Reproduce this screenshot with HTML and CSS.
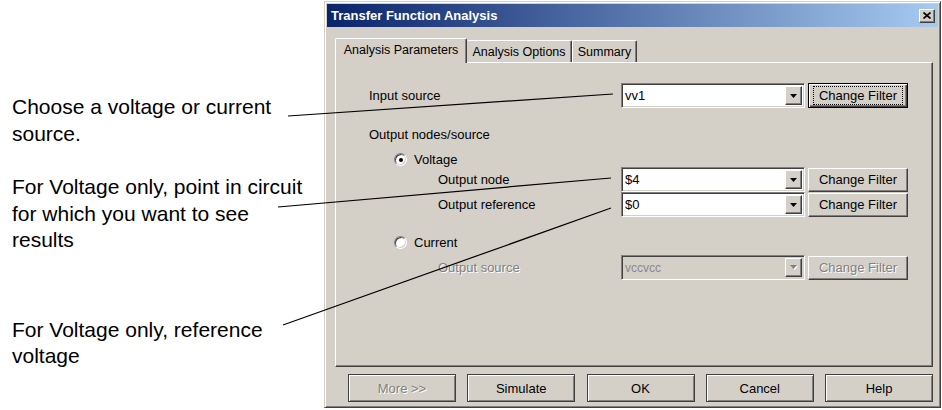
FILE: index.html
```html
<!DOCTYPE html>
<html>
<head>
<meta charset="utf-8">
<title>Transfer Function Analysis</title>
<link rel="stylesheet" href="styles.css">
</head>
<body>
<div class="page">
  <div class="notes">
    <p class="note">Choose a voltage or current<br>source.</p>
    <p class="note n2">For Voltage only, point in circuit<br>for which you want to see<br>results</p>
    <p class="note n3">For Voltage only, reference<br>voltage</p>
  </div>
  <div class="dialog">
    <div class="titlebar">
      <span class="title">Transfer Function Analysis</span>
      <span class="close"><svg width="8" height="7" viewBox="0 0 8 7"><path d="M0.5 0.5 L7.5 6.5 M7.5 0.5 L0.5 6.5" stroke="#000" stroke-width="1.7" fill="none"/></svg></span>
    </div>
    <div class="client">
      <div class="tabs">
        <div class="tab active t1">Analysis Parameters</div>
        <div class="tab t2">Analysis Options</div>
        <div class="tab t3">Summary</div>
      </div>
      <div class="panel">
        <div class="row">
          <span class="lbl">Input source</span>
          <div class="combo"><span class="val">vv1</span><span class="drop"><svg width="7" height="4" viewBox="0 0 7 4"><path d="M0 0 H7 L3.5 4 Z" fill="#000"/></svg></span></div>
          <div class="cf focus"><span class="focusrect">Change Filter</span></div>
        </div>
        <div class="heading">Output nodes/source</div>
        <div class="radiorow r1"><span class="radio checked"></span><span>Voltage</span></div>
        <div class="row">
          <span class="lbl sub">Output node</span>
          <div class="combo"><span class="val">$4</span><span class="drop"><svg width="7" height="4" viewBox="0 0 7 4"><path d="M0 0 H7 L3.5 4 Z" fill="#000"/></svg></span></div>
          <div class="cf">Change Filter</div>
        </div>
        <div class="row">
          <span class="lbl sub">Output reference</span>
          <div class="combo"><span class="val">$0</span><span class="drop"><svg width="7" height="4" viewBox="0 0 7 4"><path d="M0 0 H7 L3.5 4 Z" fill="#000"/></svg></span></div>
          <div class="cf">Change Filter</div>
        </div>
        <div class="radiorow r2"><span class="radio"></span><span>Current</span></div>
        <div class="row r3">
          <span class="lbl sub disabled">Output source</span>
          <div class="combo off"><span class="val">vccvcc</span><span class="drop"><svg width="8" height="5" viewBox="0 0 8 5"><path d="M1 1 H8 L4.5 5 Z" fill="#fff"/><path d="M0 0 H7 L3.5 4 Z" fill="#808080"/></svg></span></div>
          <div class="cf disabled">Change Filter</div>
        </div>
      </div>
      <div class="buttons">
        <div class="btn disabled">More &gt;&gt;</div>
        <div class="btn">Simulate</div>
        <div class="btn">OK</div>
        <div class="btn">Cancel</div>
        <div class="btn">Help</div>
      </div>
    </div>
  </div>
</div>
<svg class="leaders" width="942" height="410" viewBox="0 0 942 410">
  <line x1="288" y1="116" x2="613" y2="94" stroke="#000" stroke-width="1.2"/>
  <line x1="278" y1="207" x2="611" y2="178" stroke="#000" stroke-width="1.2"/>
  <line x1="283" y1="325" x2="611" y2="208" stroke="#000" stroke-width="1.2"/>
</svg>
</body>
</html>
```
FILE: styles.css
```css
html, body {
  margin: 0;
  padding: 0;
}
body {
  width: 942px;
  height: 410px;
  background: #fff;
  position: relative;
  overflow: hidden;
  font-family: "Liberation Sans", Arial, sans-serif;
}
.page {
  display: flex;
  height: 410px;
}
.notes {
  width: 324px;
  box-sizing: border-box;
  padding: 94px 0 0 12px;
  font-size: 21px;
  line-height: 26.5px;
  color: #000;
}
.note {
  margin: 0;
}
.n2 { margin-top: 27px; }
.n3 { margin-top: 63px; }

.dialog {
  margin-top: 1px;
  width: 617px;
  height: 407px;
  box-sizing: border-box;
  background: #d4d0c8;
  border: 1px solid;
  border-color: #d4d0c8 #404040 #404040 #d4d0c8;
  box-shadow: inset 1px 1px #fff, inset -1px -1px #808080;
  padding: 2px;
  display: flex;
  flex-direction: column;
  font-size: 13px;
  color: #000;
}
.titlebar {
  height: 23px;
  flex: none;
  background: linear-gradient(to right, #0a246a, #a6caf0);
  display: flex;
  align-items: center;
  justify-content: space-between;
  padding: 0 3px 0 4px;
}
.title {
  color: #fff;
  font-weight: bold;
  font-size: 13px;
}
.close {
  width: 16px;
  height: 14px;
  box-sizing: border-box;
  background: #d4d0c8;
  border: 1px solid;
  border-color: #fff #404040 #404040 #fff;
  box-shadow: inset -1px -1px #808080;
  display: flex;
  align-items: center;
  justify-content: center;
}
.close svg { display: block; }

.client {
  padding: 11px 0 0 8px;
  flex: 1;
}
.tabs {
  display: flex;
  align-items: flex-end;
  height: 24px;
  position: relative;
  z-index: 1;
  font-size: 12.5px;
}
.tab {
  box-sizing: border-box;
  height: 22px;
  border-top: 1px solid #fff;
  border-left: 1px solid #fff;
  border-right: 1px solid #404040;
  box-shadow: inset -1px 0 #808080;
  border-radius: 2px 2px 0 0;
  display: flex;
  align-items: center;
  justify-content: center;
  background: #d4d0c8;
  white-space: nowrap;
}
.tab.active {
  height: 25px;
  margin-bottom: -1px;
  padding-bottom: 2px;
}
.t1 { width: 132px; }
.t2 { width: 105px; border-left: none; }
.t3 { width: 65px; }

.panel {
  width: 598px;
  height: 305px;
  box-sizing: border-box;
  border: 1px solid;
  border-color: #fff #404040 #404040 #fff;
  box-shadow: inset -1px -1px #808080;
  padding: 20px 0 0 33px;
}
.row {
  display: flex;
  align-items: center;
  height: 25px;
}
.lbl {
  width: 252px;
  box-sizing: border-box;
}
.lbl.sub { padding-left: 69px; }
.combo {
  width: 184px;
  height: 25px;
  box-sizing: border-box;
  background: #fff;
  border: 1px solid;
  border-color: #808080 #fff #fff #808080;
  box-shadow: inset 1px 1px #404040, inset -1px -1px #d4d0c8;
  display: flex;
  align-items: stretch;
}
.combo .val {
  flex: 1;
  padding-left: 3px;
  display: flex;
  align-items: center;
}
.combo.off { background: #d4d0c8; }
.combo.off .val { color: #8a8a8a; font-size: 12px; }
.drop {
  width: 17px;
  margin: 2px;
  box-sizing: border-box;
  background: #d4d0c8;
  border: 1px solid;
  border-color: #fff #404040 #404040 #fff;
  box-shadow: inset -1px -1px #808080;
  display: flex;
  align-items: center;
  justify-content: center;
}
.drop svg { display: block; }
.cf {
  width: 100px;
  height: 24px;
  margin-left: 3px;
  box-sizing: border-box;
  border: 1px solid;
  border-color: #fff #404040 #404040 #fff;
  box-shadow: inset -1px -1px #808080;
  display: flex;
  align-items: center;
  justify-content: center;
  white-space: nowrap;
}
.cf.focus {
  border: 1px solid #000;
  box-shadow: inset 1px 1px #fff, inset -1px -1px #404040, inset -2px -2px #808080;
  height: 25px;
}
.focusrect {
  outline: 1px dotted #000;
  outline-offset: 0;
  padding: 1px 0;
  width: 88px;
  text-align: center;
  white-space: nowrap;
}
.heading {
  margin-top: 19px;
  height: 16px;
  line-height: 16px;
}
.radiorow {
  display: flex;
  align-items: center;
  padding-left: 25px;
}
.r1 { margin-top: 9px; height: 15px; }
.r2 { margin-top: 17px; height: 16px; }
.r3 { margin-top: 5px; }
.radio {
  width: 13px;
  height: 13px;
  box-sizing: border-box;
  border-radius: 50%;
  background: #fff;
  border: 1px solid;
  border-color: #808080 #fff #fff #808080;
  box-shadow: inset 1px 1px #404040, inset -1px -1px #d4d0c8;
  margin-right: 7px;
  position: relative;
}
.radio.checked::after {
  content: "";
  position: absolute;
  left: 3.5px;
  top: 3.5px;
  width: 4px;
  height: 4px;
  border-radius: 50%;
  background: #000;
}
.disabled {
  color: #808080;
  text-shadow: 1px 1px #fff;
}
.buttons {
  display: flex;
  justify-content: space-between;
  width: 585px;
  margin: 7px 0 0 13px;
}
.btn {
  width: 108px;
  height: 28px;
  box-sizing: border-box;
  border: 1px solid #404040;
  box-shadow: inset 1px 1px #fff, inset -1px -1px #808080;
  display: flex;
  align-items: center;
  justify-content: center;
}
.leaders {
  position: absolute;
  left: 0;
  top: 0;
  pointer-events: none;
}
```
